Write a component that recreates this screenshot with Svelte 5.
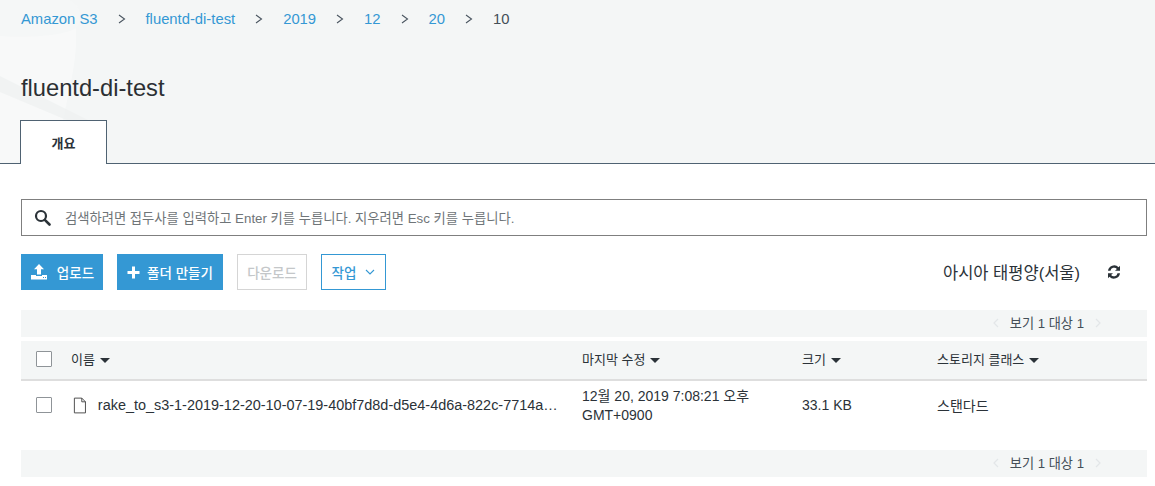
<script>
  const crumbs = ['Amazon S3', 'fluentd-di-test', '2019', '12', '20'];
  const columns = [
    { label: '이름', cls: 'name' },
    { label: '마지막 수정', cls: 'date' },
    { label: '크기', cls: 'size' },
    { label: '스토리지 클래스', cls: 'storage' }
  ];
</script>

{#snippet pager()}
  <div class="pager">
    <svg width="6" height="10" viewBox="0 0 6 10"><path d="M5 1L1 5l4 4" fill="none" stroke="#e3e6e8" stroke-width="1.200" /></svg>
    <span>보기 1 대상 1</span>
    <svg width="6" height="10" viewBox="0 0 6 10"><path d="M1 1l4 4-4 4" fill="none" stroke="#e3e6e8" stroke-width="1.200" /></svg>
  </div>
{/snippet}

<div class="page">
  <header>
    <svg class="watermark" width="110" height="163" viewBox="0 0 110 163" aria-hidden="true">
      <path d="M0 36C30 38 62 36 76 28C78 60 68 95 62 125C50 150 25 163 0 163Z" fill="#fff" opacity=".38" />
      <path d="M0 0H70C82 8 84 20 76 28C60 37 30 38 0 36Z" fill="#fff" opacity=".14" />
      <path d="M0 76L92 122L88 129L0 92Z" fill="#eef1f1" opacity=".7" />
    </svg>
    <nav>
      {#each crumbs as crumb}
        <a href="#top">{crumb}</a>
        <svg class="sep" width="8" height="10" viewBox="0 0 8 10"><path d="M1 1l5.500 4-5.500 4" fill="none" stroke="#4a5560" stroke-width="1.100" /></svg>
      {/each}
      <span class="current">10</span>
    </nav>
    <h1>fluentd-di-test</h1>
    <div class="tab">개요</div>
  </header>

  <main>
    <div class="search">
      <svg width="17" height="17" viewBox="0 0 17 17"><circle cx="7" cy="7" r="5" fill="none" stroke="#2b3238" stroke-width="2.200" /><path d="M10.800 10.800l4.700 4.700" stroke="#2b3238" stroke-width="2.600" stroke-linecap="round" /></svg>
      <span>검색하려면 접두사를 입력하고 Enter 키를 누릅니다. 지우려면 Esc 키를 누릅니다.</span>
    </div>

    <div class="toolbar">
      <button class="primary upload">
        <svg width="18" height="16" viewBox="0 0 18 16"><path d="M9 0l5 5.200h-3V10.500H7V5.200H4z M1 11h5v1h6v-1h5v4.500H1z" fill="#fff" /><path d="M13 13.500h1M15 13.500h1" stroke="#3498d4" stroke-width="1" /></svg>
        업로드
      </button>
      <button class="primary folder">
        <svg width="13" height="13" viewBox="0 0 13 13"><path d="M5 .5h3v4.500h4.500v3H8v4.500H5V8H.5V5H5z" fill="#fff" /></svg>
        폴더 만들기
      </button>
      <button class="disabled">다운로드</button>
      <button class="outline">
        작업
        <svg width="10" height="6" viewBox="0 0 10 6"><path d="M1 1l4 4 4-4" fill="none" stroke="#3498d4" stroke-width="1.100" /></svg>
      </button>
      <div class="region">아시아 태평양(서울)</div>
      <svg class="refresh" width="14" height="14" viewBox="0 0 14 14"><path d="M13 .8v5H8l1.900-1.900A3.700 3.700 0 0 0 3.500 5.800H1A6.200 6.200 0 0 1 11.600 2.200z M1 13.200v-5h5L4.100 10.100a3.700 3.700 0 0 0 6.400-1.900H13A6.200 6.200 0 0 1 2.400 11.800z" fill="#2b3238" /></svg>
    </div>

    <div class="strip">{@render pager()}</div>

    <div class="thead">
      <div class="check"><span class="box"></span></div>
      {#each columns as col}
        <div class={col.cls}>{col.label} <i class="caret"></i></div>
      {/each}
    </div>

    <div class="row">
      <div class="check"><span class="box"></span></div>
      <div class="name file">
        <svg width="15" height="17" viewBox="0 0 15 17"><path d="M1.500.500h8l4 4v12h-12z M9.500.500v4h4" fill="none" stroke="#444" stroke-width="1" /></svg>
        <span class="fname">rake_to_s3-1-2019-12-20-10-07-19-40bf7d8d-d5e4-4d6a-822c-7714a9b1c2e3</span>
      </div>
      <div class="date">12월 20, 2019 7:08:21 오후<br />GMT+0900</div>
      <div class="size">33.1 KB</div>
      <div class="storage">스탠다드</div>
    </div>

    <div class="strip">{@render pager()}</div>
  </main>
</div>

<style>
  :global(body) {
    background: #fff;
  }
  .page {
    width: 1155px;
    height: 486px;
    overflow: hidden;
    font-family: "Liberation Sans", "Noto Sans CJK KR", sans-serif;
    color: #2b3238;
    font-size: 13px;
  }
  header {
    position: relative;
    height: 164px;
    padding: 11px 20px 0 21px;
    box-sizing: border-box;
    background: #f4f6f6;
    border-bottom: 1px solid #4f6272;
  }
  .watermark {
    position: absolute;
    left: 0;
    top: 0;
  }
  nav {
    position: relative;
    display: flex;
    align-items: center;
    gap: 20px;
    height: 16px;
    font-size: 14.800px;
  }
  nav a {
    color: #3498d4;
    text-decoration: none;
  }
  .sep {
    flex: none;
  }
  .current {
    color: #444f58;
  }
  h1 {
    position: relative;
    margin: 47px 0 0;
    height: 28px;
    font-size: 23.700px;
    line-height: 28px;
    font-weight: 400;
    color: #2b2f33;
  }
  .tab {
    position: relative;
    width: 85px;
    height: 43px;
    margin-top: 18px;
    margin-left: -1px;
    display: flex;
    align-items: center;
    justify-content: center;
    background: #fff;
    border: 1px solid #4f6272;
    border-bottom: 0;
    font-size: 13px;
    font-weight: 700;
  }
  main {
    padding: 35px 8px 0 21px;
  }
  .search {
    height: 37px;
    box-sizing: border-box;
    border: 1px solid #7f7f7f;
    display: flex;
    align-items: center;
    gap: 14px;
    padding-left: 12px;
    color: #6f7578;
    font-size: 13.300px;
  }
  .toolbar {
    display: flex;
    align-items: center;
    margin-top: 18px;
    height: 36px;
  }
  button {
    height: 36px;
    box-sizing: border-box;
    font: inherit;
    font-size: 13.500px;
    font-weight: 500;
    display: flex;
    align-items: center;
    justify-content: center;
    padding: 0;
    background: #fff;
    border: 1px solid transparent;
  }
  .primary {
    background: #3498d4;
    color: #fff;
  }
  .upload {
    width: 82px;
    gap: 9px;
  }
  .folder {
    width: 106px;
    margin-left: 14px;
    gap: 7px;
  }
  .disabled {
    width: 70px;
    margin-left: 14px;
    color: #c4c7c9;
    border-color: #d5d5d5;
  }
  .outline {
    width: 65px;
    margin-left: 14px;
    gap: 9px;
    color: #3498d4;
    border-color: #3498d4;
  }
  .region {
    margin-left: auto;
    font-size: 16.500px;
    color: #2b3238;
  }
  .refresh {
    margin: 0 26px 0 27px;
  }
  .strip {
    height: 27px;
    margin-top: 20px;
    background: #f4f6f6;
    display: flex;
    justify-content: flex-end;
    align-items: center;
  }
  .strip:last-child {
    margin-top: 0;
  }
  .pager {
    display: flex;
    align-items: center;
    gap: 11px;
    margin-right: 46px;
    padding-bottom: 2px;
    font-size: 13.200px;
    color: #444f58;
  }
  .thead,
  .row {
    display: grid;
    grid-template-columns: 50px 511px 220px 135px 1fr;
    align-items: center;
  }
  .thead {
    height: 35px;
    margin-top: 4px;
    padding-bottom: 3px;
    background: #f4f6f6;
    border-bottom: 2px solid #dedede;
    font-size: 13px;
  }
  .row {
    height: 48px;
    padding-bottom: 21px;
    font-size: 14px;
  }
  .check {
    padding-left: 15px;
    display: flex;
  }
  .box {
    width: 14px;
    height: 14px;
    border: 1px solid #8f9498;
    border-radius: 1px;
    background: #fff;
  }
  .caret {
    display: inline-block;
    margin-left: 1px;
    vertical-align: middle;
    border-left: 5px solid transparent;
    border-right: 5px solid transparent;
    border-top: 5px solid #2b3238;
  }
  .file {
    display: flex;
    align-items: center;
    gap: 10px;
    min-width: 0;
    padding-right: 22px;
    padding-left: 2px;
    font-size: 14.450px;
  }
  .fname {
    margin-left: 1px;
    overflow: hidden;
    text-overflow: ellipsis;
    white-space: nowrap;
  }
  .row .date {
    line-height: 19px;
    margin-top: 2px;
  }
</style>
